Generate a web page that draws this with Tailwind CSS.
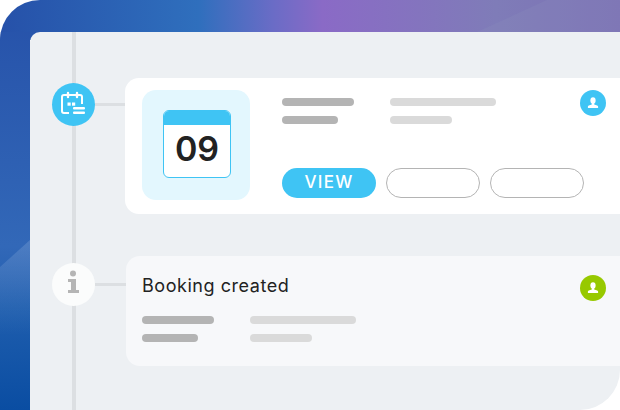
<!DOCTYPE html>
<html>
<head>
    <meta charset="utf-8">
    <script src="https://cdn.jsdelivr.net/npm/@tailwindcss/browser@4"></script>
</head>
<body class="bg-white">
    <div class="relative w-[620px] h-[410px] overflow-hidden bg-white font-['Inter',sans-serif]">
        <!-- backdrop -->
        <svg class="absolute inset-0 rounded-tl-[40px]" width="620" height="410" viewBox="0 0 620 410">
            <defs>
                <linearGradient id="top" x1="0" y1="0" x2="620" y2="0" gradientUnits="userSpaceOnUse">
                    <stop offset="0" stop-color="#2651a9"/>
                    <stop offset="0.32" stop-color="#2f6fbd"/>
                    <stop offset="0.44" stop-color="#6a6cc6"/>
                    <stop offset="0.52" stop-color="#8a6ac6"/>
                    <stop offset="0.8" stop-color="#7f7cb8"/>
                    <stop offset="1" stop-color="#7c70b4"/>
                </linearGradient>
                <linearGradient id="side" x1="0" y1="0" x2="0" y2="410" gradientUnits="userSpaceOnUse">
                    <stop offset="0" stop-color="#2651a9"/>
                    <stop offset="0.6" stop-color="#3268b8"/>
                    <stop offset="0.75" stop-color="#1f5eae"/>
                    <stop offset="1" stop-color="#0a4da2"/>
                </linearGradient>
                <linearGradient id="wedge" x1="0" y1="240" x2="0" y2="335" gradientUnits="userSpaceOnUse">
                    <stop offset="0" stop-color="#8fb0dc" stop-opacity="0.3"/>
                    <stop offset="1" stop-color="#8fb0dc" stop-opacity="0"/>
                </linearGradient>
            </defs>
            <rect width="620" height="40" fill="url(#top)"/>
            <polygon points="477,32 547,0 620,0 620,32" fill="#8d92c0" opacity="0.22"/>
            <rect y="32" width="30" height="378" fill="url(#side)"/>
            <polygon points="0,267 30,240 30,335 0,335" fill="url(#wedge)"/>
        </svg>

        <!-- panel -->
        <div class="absolute left-[30px] top-[32px] w-[590px] h-[378px] overflow-hidden rounded-tl-[10px] rounded-br-[40px] bg-[#edf0f3] pl-[22px] pt-[46px]">
            <div class="absolute left-[42px] top-0 w-[4px] h-[378px] bg-[#dcdfe2]"></div>

            <!-- booking row -->
            <div class="relative flex items-start">
                <div class="mt-[5px] flex w-[43px] h-[43px] shrink-0 items-center justify-center rounded-full bg-[#3fc4f4]">
                    <svg width="43" height="43" viewBox="0 0 43 43" fill="none">
                        <path d="M17 30H12a2 2 0 0 1-2-2V14a2 2 0 0 1 2-2H28a2 2 0 0 1 2 2V21" stroke="#fff" stroke-width="2"/>
                        <path d="M16 10v4M25 10v4" stroke="#fff" stroke-width="2.4" stroke-linecap="round"/>
                        <rect x="15.500" y="19.500" width="3.200" height="3.200" fill="#fff"/>
                        <rect x="20" y="19.500" width="3.200" height="3.200" fill="#fff"/>
                        <rect x="21" y="24" width="12" height="2.600" rx="1" fill="#fff"/>
                        <rect x="21" y="28.400" width="12" height="2.600" rx="1" fill="#fff"/>
                    </svg>
                </div>
                <div class="mt-[25px] w-[30px] h-[3px] shrink-0 bg-[#dcdfe2]"></div>
                <div class="flex w-[520px] h-[136px] shrink-0 rounded-[14px] bg-white pl-[17px] pt-[12px]">
                    <div class="w-[108px] h-[110px] shrink-0 rounded-[14px] bg-[#e3f7fe] pl-[21px] pt-[20px]">
                        <div class="w-[68px] h-[68px] overflow-hidden rounded-[6px] border border-[#3fc4f4] bg-white">
                            <div class="h-[14px] bg-[#3fc4f4]"></div>
                            <div class="flex h-[48px] items-center justify-center text-[34px] font-semibold leading-none text-[#222222]">09</div>
                        </div>
                    </div>
                    <div class="ml-[32px] w-[324px] shrink-0 pt-[8px]">
                        <div class="flex items-start">
                            <div class="flex w-[108px] shrink-0 flex-col gap-[10px]">
                                <div class="w-[72px] h-[8px] rounded-full bg-[#b4b4b4]"></div>
                                <div class="w-[56px] h-[8px] rounded-full bg-[#b4b4b4]"></div>
                            </div>
                            <div class="flex w-[190px] shrink-0 flex-col gap-[10px]">
                                <div class="w-[106px] h-[8px] rounded-full bg-[#dadada]"></div>
                                <div class="w-[62px] h-[8px] rounded-full bg-[#dadada]"></div>
                            </div>
                            <div class="-mt-[8px] flex w-[26px] h-[26px] shrink-0 items-center justify-center rounded-full bg-[#3fc4f4]">
                                <svg width="26" height="26" viewBox="0 0 26 26" fill="#fff">
                                    <ellipse cx="13" cy="10.500" rx="2.600" ry="3.200"/>
                                    <path d="M11.800 12.500h2.400v2l3 .9c.6.200.9.600.9 1.200V18H7.900v-1.400c0-.6.300-1 .9-1.200l3-.9z"/>
                                </svg>
                            </div>
                        </div>
                        <div class="mt-[44px] flex gap-[10px]">
                            <div class="flex w-[94px] h-[30px] items-center justify-center rounded-full bg-[#3fc4f4] text-[17px] font-medium tracking-[1.2px] text-white">VIEW</div>
                            <div class="w-[94px] h-[30px] rounded-full border border-[#b4b4b4]"></div>
                            <div class="w-[94px] h-[30px] rounded-full border border-[#b4b4b4]"></div>
                        </div>
                    </div>
                </div>
            </div>

            <!-- created row -->
            <div class="relative mt-[42px] flex items-start">
                <div class="mt-[7px] flex w-[43px] h-[43px] shrink-0 items-center justify-center rounded-full bg-[#fbfcfc]">
                    <svg width="43" height="43" viewBox="0 0 43 43" fill="#b5b5b5">
                        <circle cx="21" cy="10.500" r="3"/>
                        <path d="M16 16h8v11h3v3H16v-3h3v-8h-3z"/>
                    </svg>
                </div>
                <div class="mt-[27px] w-[31px] h-[3px] shrink-0 bg-[#dcdfe2]"></div>
                <div class="w-[520px] h-[110px] shrink-0 rounded-[14px] bg-[#f7f8fa] pl-[16px] pt-[19px]">
                    <div class="flex items-start">
                        <div class="w-[438px] text-[18px] leading-[22px] tracking-[0.55px] text-[#222222]">Booking created</div>
                        <div class="flex w-[26px] h-[26px] shrink-0 items-center justify-center rounded-full bg-[#97c900]">
                            <svg width="26" height="26" viewBox="0 0 26 26" fill="#fff">
                                <ellipse cx="13" cy="10.500" rx="2.600" ry="3.200"/>
                                <path d="M11.800 12.500h2.400v2l3 .9c.6.200.9.600.9 1.200V18H7.900v-1.400c0-.6.300-1 .9-1.200l3-.9z"/>
                            </svg>
                        </div>
                    </div>
                    <div class="mt-[15px] flex">
                        <div class="flex w-[108px] flex-col gap-[10px]">
                            <div class="w-[72px] h-[8px] rounded-full bg-[#b4b4b4]"></div>
                            <div class="w-[56px] h-[8px] rounded-full bg-[#b4b4b4]"></div>
                        </div>
                        <div class="flex flex-col gap-[10px]">
                            <div class="w-[106px] h-[8px] rounded-full bg-[#dadada]"></div>
                            <div class="w-[62px] h-[8px] rounded-full bg-[#dadada]"></div>
                        </div>
                    </div>
                </div>
            </div>
        </div>
    </div>
</body>
</html>
